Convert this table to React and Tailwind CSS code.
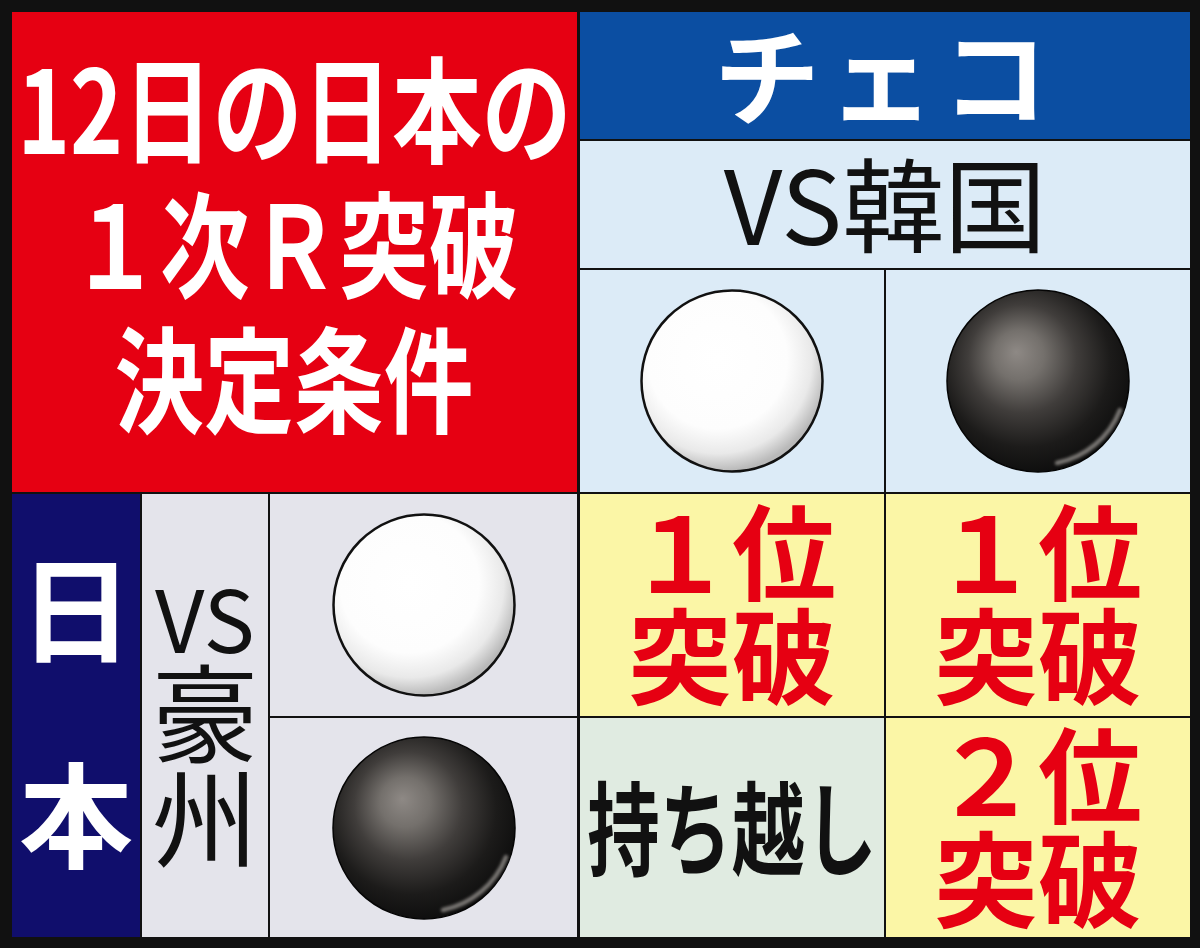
import React from 'react';

const JP = "font-['Noto_Sans_CJK_JP','Noto_Sans',sans-serif]";

const Stone = ({ color, id }) => {
  if (color === 'white') {
    return (
      <svg width="186" height="186" viewBox="0 0 186 186">
        <defs>
          <radialGradient id={id} cx="42%" cy="38%" r="62%">
            <stop offset="0%" stopColor="#ffffff" />
            <stop offset="62%" stopColor="#fdfdfd" />
            <stop offset="84%" stopColor="#e9e9e9" />
            <stop offset="100%" stopColor="#b9b9b9" />
          </radialGradient>
        </defs>
        <circle cx="93" cy="93" r="90.5" fill={`url(#${id})`} stroke="#111" strokeWidth="2.5" />
      </svg>
    );
  }
  return (
    <svg width="186" height="186" viewBox="0 0 186 186">
      <defs>
        <radialGradient id={id} cx="45%" cy="42%" r="62%" fx="38%" fy="34%">
          <stop offset="0%" stopColor="#8e8985" />
          <stop offset="22%" stopColor="#74706c" />
          <stop offset="48%" stopColor="#403d3b" />
          <stop offset="75%" stopColor="#1c1b1a" />
          <stop offset="100%" stopColor="#0b0b0b" />
        </radialGradient>
        <filter id={`${id}-blur`} x="-20%" y="-20%" width="140%" height="140%">
          <feGaussianBlur stdDeviation="1.8" />
        </filter>
      </defs>
      <circle cx="93" cy="93" r="91" fill={`url(#${id})`} stroke="#050505" strokeWidth="1.5" />
      {/* rim light on the lower right */}
      <path
        d="M 175 122 A 86 86 0 0 1 112 175"
        fill="none"
        stroke="#a5a19d"
        strokeWidth="4.5"
        strokeLinecap="round"
        opacity="0.7"
        filter={`url(#${id}-blur)`}
      />
    </svg>
  );
};

const Cell = ({ className = '', children }) => (
  <div className={`flex items-center justify-center overflow-hidden ${className}`}>{children}</div>
);

const RankText = ({ top }) => (
  <div className={`${JP} flex flex-col items-center font-bold text-[#e60012] text-[104px] leading-[104px] whitespace-nowrap pb-[10px]`}>
    <span>{top}</span>
    <span>突破</span>
  </div>
);

export default function App() {
  return (
    <div className={`${JP} w-[1200px] h-[948px] bg-[#111] pt-[12px] pl-[12px] pr-[10px] pb-[11px] flex flex-col gap-[2px]`}>
      {/* upper half */}
      <div className="flex gap-[3px] h-[480px]">
        <Cell className="w-[565px] bg-[#e60012] flex-col pb-[26px]">
          {['12日の日本の', '１次Ｒ突破', '決定条件'].map((line) => (
            <div key={line} className="flex justify-center w-full h-[135px] items-center">
              <span className="whitespace-nowrap text-white font-bold text-[115px] leading-[135px] scale-x-[0.78]">
                {line}
              </span>
            </div>
          ))}
        </Cell>
        <div className="w-[610px] flex flex-col gap-[2px]">
          <Cell className="h-[127px] bg-[#0b4ea2]">
            <span className="text-white font-bold text-[106px] leading-none tracking-[8px] pb-[10px]">チェコ</span>
          </Cell>
          <Cell className="h-[127px] bg-[#dcebf7]">
            <span className="text-[#111] font-normal text-[102px] leading-none pb-[8px]">VS韓国</span>
          </Cell>
          <div className="h-[222px] flex gap-[2px]">
            <Cell className="w-[304px] bg-[#dcebf7]">
              <Stone color="white" id="s1" />
            </Cell>
            <Cell className="w-[304px] bg-[#dcebf7]">
              <Stone color="black" id="s2" />
            </Cell>
          </div>
        </div>
      </div>

      {/* lower half */}
      <div className="flex gap-[2px] h-[443px]">
        <Cell className="w-[128px] bg-[#100e6c] flex-col gap-[92px] text-white font-bold text-[114px] leading-none pb-[18px]">
          <span>日</span>
          <span>本</span>
        </Cell>
        <Cell className="w-[126px] bg-[#e4e4eb] flex-col text-[#111] font-normal pt-[10px]">
          <span className="text-[86px] leading-[80px]">VS</span>
          <span className="text-[106px] leading-[105px]">豪</span>
          <span className="text-[106px] leading-[105px]">州</span>
        </Cell>
        <div className="flex-1 flex flex-col gap-[2px]">
          <div className="h-[222px] flex gap-[2px]">
            <Cell className="w-[307px] mr-[1px] bg-[#e4e4eb]">
              <Stone color="white" id="s3" />
            </Cell>
            <Cell className="w-[304px] bg-[#fbf6a6]">
              <RankText top="１位" />
            </Cell>
            <Cell className="w-[304px] bg-[#fbf6a6]">
              <RankText top="１位" />
            </Cell>
          </div>
          <div className="h-[219px] flex gap-[2px]">
            <Cell className="w-[307px] mr-[1px] bg-[#e4e4eb]">
              <Stone color="black" id="s4" />
            </Cell>
            <Cell className="w-[304px] bg-[#e0ebe1]">
              <span className="whitespace-nowrap text-[#111] font-bold text-[102px] leading-none scale-x-[0.71] pb-[8px]">
                持ち越し
              </span>
            </Cell>
            <Cell className="w-[304px] bg-[#fbf6a6]">
              <RankText top="２位" />
            </Cell>
          </div>
        </div>
      </div>
    </div>
  );
}
